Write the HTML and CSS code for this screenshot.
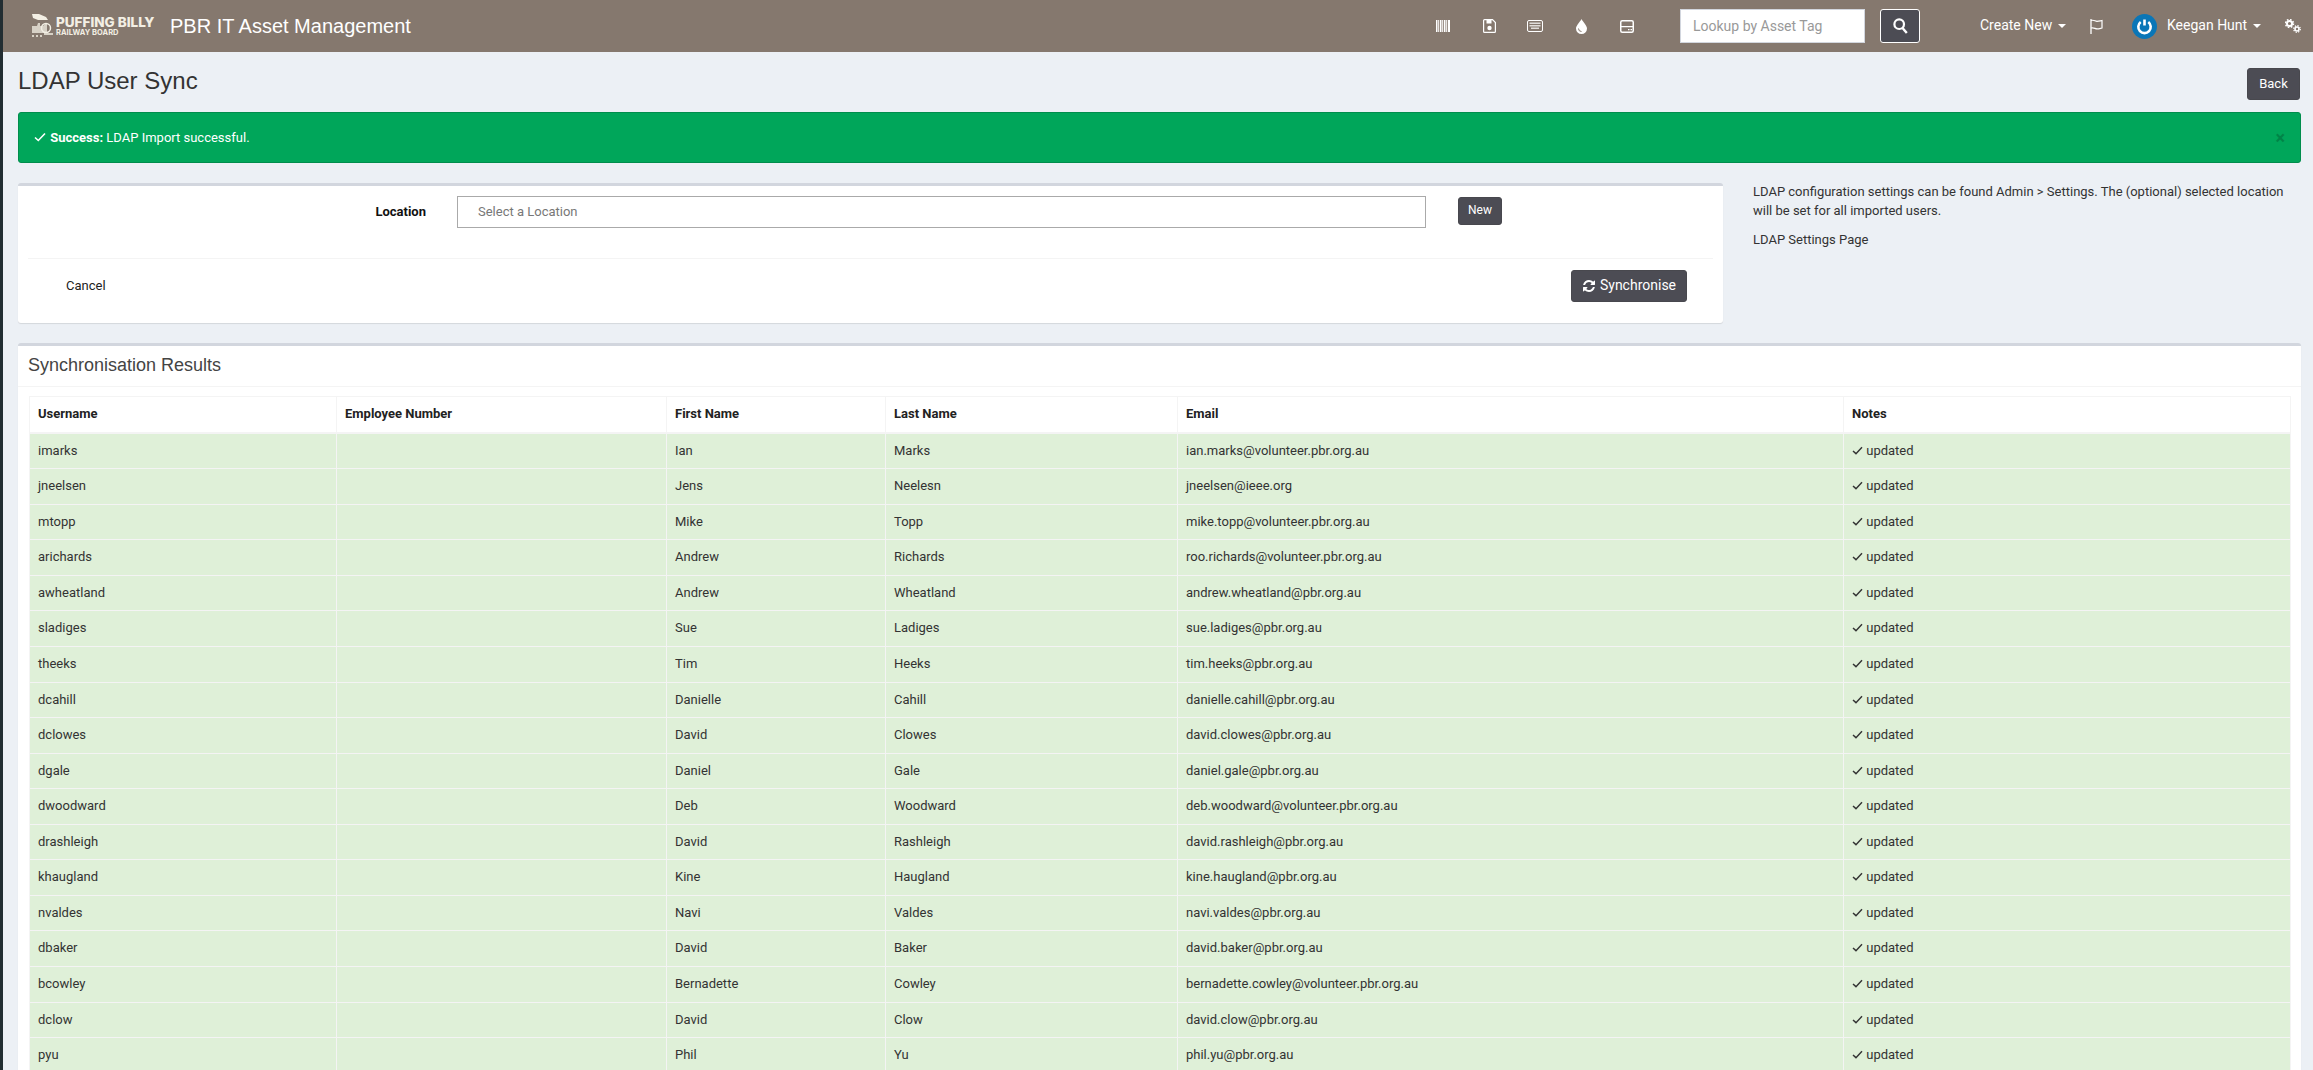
FILE: index.html
```html
<!DOCTYPE html>
<html lang="en">
<head>
    <meta charset="UTF-8">
    <title>LDAP User Sync</title>
    <link rel="stylesheet" href="styles.css">
</head>
<body>
    <div class="strip"></div>
    <div class="app">
        <!-- top bar -->
        <header class="topbar">
            <a class="logo">
                <svg class="logo-loco" width="21" height="26" viewBox="0 0 21 26">
                    <path d="M0 1h7l7 3 2 3H6L1 5z" fill="#f3efe4"/>
                    <path d="M0 13h5l1-3h2v3h3l2-2h2v9H0z" fill="#f3efe4" opacity=".75"/>
                    <circle cx="14" cy="15" r="4.500" fill="none" stroke="#f3efe4" stroke-width="1.500"/>
                    <path d="M0 23h2M4 23h2M8 23h2M12 21h9" stroke="#f3efe4" stroke-width="1.500"/>
                </svg>
                <span class="logo-words">
                    <span class="logo-main">PUFFING BILLY</span>
                    <span class="logo-sub">RAILWAY BOARD</span>
                </span>
            </a>
            <a class="app-name">PBR IT Asset Management</a>

            <nav class="nav-icons">
                <a><svg width="14" height="12" viewBox="0 0 14 12"><path d="M0 0h1.500v12H0zM2.200 0h1v12h-1zM4 0h1.500v12H4zM6.200 0h1v12h-1zM8 0h1.500v12H8zM10.200 0h1v12h-1zM12 0h2v12h-2z" fill="#fff"/></svg></a>
                <a><svg width="13" height="14" viewBox="0 0 13 14"><path d="M1.500.6h8l2.900 2.900v9a.9.900 0 0 1-.9.900h-10a.9.900 0 0 1-.9-.900v-11a.9.900 0 0 1 .9-.900z" fill="none" stroke="#fff" stroke-width="1.200"/><path d="M3.500 1h5v3.500h-5z" fill="#fff"/><circle cx="6.500" cy="9" r="2.200" fill="#fff"/></svg></a>
                <a><svg width="16" height="12" viewBox="0 0 16 12"><rect x=".5" y=".5" width="15" height="11" rx="1.500" fill="none" stroke="#fff"/><path d="M2.500 2.500h11V4h-11zM2.500 5h11v1.500h-11zM4 7.500h8V9H4z" fill="#fff" opacity=".75"/></svg></a>
                <a><svg width="11" height="15" viewBox="0 0 11 15"><path d="M5.500 0C7 3 11 6.500 11 9.500a5.500 5.500 0 0 1-11 0C0 6.500 4 3 5.500 0z" fill="#fff"/><path d="M2.500 9.500a3 3 0 0 0 3 3" fill="none" stroke="#85786e"/></svg></a>
                <a><svg width="14" height="13" viewBox="0 0 14 13"><rect x=".75" y=".75" width="12.500" height="11.500" rx="1.500" fill="none" stroke="#fff" stroke-width="1.500"/><path d="M1 6h12v1.200H1zM8 9h1.500v1.200H8zM10.500 9H12v1.200h-1.500z" fill="#fff"/></svg></a>
            </nav>

            <input class="tag-lookup" type="text" placeholder="Lookup by Asset Tag">
            <button class="tag-search">
                <svg width="15" height="16" viewBox="0 0 15 16"><circle cx="6.200" cy="6.200" r="4.800" fill="none" stroke="#fff" stroke-width="2.200"/><path d="M9.500 10l4.300 5" stroke="#fff" stroke-width="2.400"/></svg>
            </button>

            <a class="nav-text create-new">Create New <i class="caret"></i></a>
            <a class="nav-flag"><svg width="13" height="15" viewBox="0 0 13 15"><path d="M1 0v15" stroke="#fff" stroke-width="1.300"/><path d="M1 1.500c3-1 4 .8 6 .8 2 0 3.500-.6 5-.8v7.500c-1.500.3-3 .9-5 .9-2 0-3-1.800-6-.9" fill="none" stroke="#fff" stroke-width="1.200"/></svg></a>
            <svg class="avatar" width="25" height="25" viewBox="0 0 25 25">
                <circle cx="12.500" cy="12.500" r="12.500" fill="#0a76b7"/>
                <path d="M8.700 8a6.200 6.200 0 1 0 7.600 0" fill="none" stroke="#fff" stroke-width="2.600"/>
                <path d="M12.500 5.500v6" stroke="#fff" stroke-width="2.600"/>
            </svg>
            <a class="nav-text user-name">Keegan Hunt <i class="caret"></i></a>
            <a class="nav-gears">
                <svg width="16" height="14" viewBox="0 0 16 14">
                    <circle cx="4.500" cy="4.500" r="2.600" fill="none" stroke="#fff" stroke-width="2"/>
                    <circle cx="4.500" cy="4.500" r="4" fill="none" stroke="#fff" stroke-width="1.500" stroke-dasharray="1.600 1.540"/>
                    <circle cx="12" cy="10" r="2" fill="none" stroke="#fff" stroke-width="1.600"/>
                    <circle cx="12" cy="10" r="3.300" fill="none" stroke="#fff" stroke-width="1.300" stroke-dasharray="1.300 1.290"/>
                </svg>
            </a>
        </header>

        <main class="content">
            <div class="page-head">
                <h1>LDAP User Sync</h1>
                <a class="btn back-btn">Back</a>
            </div>

            <div class="alert">
                <svg class="check" width="12" height="10" viewBox="0 0 12 10"><path d="M1 5.500l3.300 3L11 1.500" fill="none" stroke="#fff" stroke-width="1.600"/></svg>
                <strong>Success:</strong> LDAP Import successful.
                <span class="alert-close">×</span>
            </div>

            <div class="sync-row">
                <section class="box sync-form">
                    <div class="form-row">
                        <label class="form-label">Location</label>
                        <div class="fake-select">Select a Location</div>
                        <a class="btn new-btn">New</a>
                    </div>
                    <div class="form-foot">
                        <a class="cancel">Cancel</a>
                        <a class="btn sync-btn">
                            <svg width="14" height="14" viewBox="0 0 1792 1792"><path fill="#fff" d="M1639 1056q0 5-1 7-64 268-268 434.500t-478 166.500q-146 0-282.500-55t-243.500-157l-129 129q-19 19-45 19t-45-19-19-45v-448q0-26 19-45t45-19h448q26 0 45 19t19 45-19 45l-137 137q71 66 161 102t187 36q134 0 250-65t186-179q11-17 53-117 8-23 30-23h192q13 0 22.500 9.500t9.500 22.500zm25-800v448q0 26-19 45t-45 19h-448q-26 0-45-19t-19-45 19-45l138-138q-148-137-349-137-134 0-250 65t-186 179q-11 17-53 117-8 23-30 23h-199q-13 0-22.500-9.500t-9.500-22.500v-7q65-268 270-434.500t480-166.500q146 0 284 55.500t245 156.500l130-129q19-19 45-19t45 19 19 45z"/></svg>
                            Synchronise
                        </a>
                    </div>
                </section>
                <aside class="sync-help">
                    <p>LDAP configuration settings can be found Admin &gt; Settings. The (optional) selected location will be set for all imported users.</p>
                    <p><a>LDAP Settings Page</a></p>
                </aside>
            </div>

            <section class="box results">
                <h2 class="box-title">Synchronisation Results</h2>
                <div class="box-body">
                    <table class="results-table">
                        <colgroup>
                            <col class="col-user"><col class="col-emp"><col class="col-first"><col class="col-last"><col class="col-email"><col class="col-notes">
                        </colgroup>
                        <thead>
                            <tr><th>Username</th><th>Employee Number</th><th>First Name</th><th>Last Name</th><th>Email</th><th>Notes</th></tr>
                        </thead>
                        <tbody>
                            <tr><td>imarks</td><td></td><td>Ian</td><td>Marks</td><td>ian.marks@volunteer.pbr.org.au</td><td><svg class="tick" width="11" height="9" viewBox="0 0 12 10"><path d="M1 5.500l3.300 3L11 1.500" fill="none" stroke="#333" stroke-width="1.600"/></svg> updated</td></tr>
                            <tr><td>jneelsen</td><td></td><td>Jens</td><td>Neelesn</td><td>jneelsen@ieee.org</td><td><svg class="tick" width="11" height="9" viewBox="0 0 12 10"><path d="M1 5.500l3.300 3L11 1.500" fill="none" stroke="#333" stroke-width="1.600"/></svg> updated</td></tr>
                            <tr><td>mtopp</td><td></td><td>Mike</td><td>Topp</td><td>mike.topp@volunteer.pbr.org.au</td><td><svg class="tick" width="11" height="9" viewBox="0 0 12 10"><path d="M1 5.500l3.300 3L11 1.500" fill="none" stroke="#333" stroke-width="1.600"/></svg> updated</td></tr>
                            <tr><td>arichards</td><td></td><td>Andrew</td><td>Richards</td><td>roo.richards@volunteer.pbr.org.au</td><td><svg class="tick" width="11" height="9" viewBox="0 0 12 10"><path d="M1 5.500l3.300 3L11 1.500" fill="none" stroke="#333" stroke-width="1.600"/></svg> updated</td></tr>
                            <tr><td>awheatland</td><td></td><td>Andrew</td><td>Wheatland</td><td>andrew.wheatland@pbr.org.au</td><td><svg class="tick" width="11" height="9" viewBox="0 0 12 10"><path d="M1 5.500l3.300 3L11 1.500" fill="none" stroke="#333" stroke-width="1.600"/></svg> updated</td></tr>
                            <tr><td>sladiges</td><td></td><td>Sue</td><td>Ladiges</td><td>sue.ladiges@pbr.org.au</td><td><svg class="tick" width="11" height="9" viewBox="0 0 12 10"><path d="M1 5.500l3.300 3L11 1.500" fill="none" stroke="#333" stroke-width="1.600"/></svg> updated</td></tr>
                            <tr><td>theeks</td><td></td><td>Tim</td><td>Heeks</td><td>tim.heeks@pbr.org.au</td><td><svg class="tick" width="11" height="9" viewBox="0 0 12 10"><path d="M1 5.500l3.300 3L11 1.500" fill="none" stroke="#333" stroke-width="1.600"/></svg> updated</td></tr>
                            <tr><td>dcahill</td><td></td><td>Danielle</td><td>Cahill</td><td>danielle.cahill@pbr.org.au</td><td><svg class="tick" width="11" height="9" viewBox="0 0 12 10"><path d="M1 5.500l3.300 3L11 1.500" fill="none" stroke="#333" stroke-width="1.600"/></svg> updated</td></tr>
                            <tr><td>dclowes</td><td></td><td>David</td><td>Clowes</td><td>david.clowes@pbr.org.au</td><td><svg class="tick" width="11" height="9" viewBox="0 0 12 10"><path d="M1 5.500l3.300 3L11 1.500" fill="none" stroke="#333" stroke-width="1.600"/></svg> updated</td></tr>
                            <tr><td>dgale</td><td></td><td>Daniel</td><td>Gale</td><td>daniel.gale@pbr.org.au</td><td><svg class="tick" width="11" height="9" viewBox="0 0 12 10"><path d="M1 5.500l3.300 3L11 1.500" fill="none" stroke="#333" stroke-width="1.600"/></svg> updated</td></tr>
                            <tr><td>dwoodward</td><td></td><td>Deb</td><td>Woodward</td><td>deb.woodward@volunteer.pbr.org.au</td><td><svg class="tick" width="11" height="9" viewBox="0 0 12 10"><path d="M1 5.500l3.300 3L11 1.500" fill="none" stroke="#333" stroke-width="1.600"/></svg> updated</td></tr>
                            <tr><td>drashleigh</td><td></td><td>David</td><td>Rashleigh</td><td>david.rashleigh@pbr.org.au</td><td><svg class="tick" width="11" height="9" viewBox="0 0 12 10"><path d="M1 5.500l3.300 3L11 1.500" fill="none" stroke="#333" stroke-width="1.600"/></svg> updated</td></tr>
                            <tr><td>khaugland</td><td></td><td>Kine</td><td>Haugland</td><td>kine.haugland@pbr.org.au</td><td><svg class="tick" width="11" height="9" viewBox="0 0 12 10"><path d="M1 5.500l3.300 3L11 1.500" fill="none" stroke="#333" stroke-width="1.600"/></svg> updated</td></tr>
                            <tr><td>nvaldes</td><td></td><td>Navi</td><td>Valdes</td><td>navi.valdes@pbr.org.au</td><td><svg class="tick" width="11" height="9" viewBox="0 0 12 10"><path d="M1 5.500l3.300 3L11 1.500" fill="none" stroke="#333" stroke-width="1.600"/></svg> updated</td></tr>
                            <tr><td>dbaker</td><td></td><td>David</td><td>Baker</td><td>david.baker@pbr.org.au</td><td><svg class="tick" width="11" height="9" viewBox="0 0 12 10"><path d="M1 5.500l3.300 3L11 1.500" fill="none" stroke="#333" stroke-width="1.600"/></svg> updated</td></tr>
                            <tr><td>bcowley</td><td></td><td>Bernadette</td><td>Cowley</td><td>bernadette.cowley@volunteer.pbr.org.au</td><td><svg class="tick" width="11" height="9" viewBox="0 0 12 10"><path d="M1 5.500l3.300 3L11 1.500" fill="none" stroke="#333" stroke-width="1.600"/></svg> updated</td></tr>
                            <tr><td>dclow</td><td></td><td>David</td><td>Clow</td><td>david.clow@pbr.org.au</td><td><svg class="tick" width="11" height="9" viewBox="0 0 12 10"><path d="M1 5.500l3.300 3L11 1.500" fill="none" stroke="#333" stroke-width="1.600"/></svg> updated</td></tr>
                            <tr><td>pyu</td><td></td><td>Phil</td><td>Yu</td><td>phil.yu@pbr.org.au</td><td><svg class="tick" width="11" height="9" viewBox="0 0 12 10"><path d="M1 5.500l3.300 3L11 1.500" fill="none" stroke="#333" stroke-width="1.600"/></svg> updated</td></tr>
                        </tbody>
                    </table>
                </div>
            </section>
        </main>
    </div>
</body>
</html>
```

FILE: styles.css
```css
* {
    box-sizing: border-box;
    margin: 0;
    padding: 0;
}

html, body {
    height: 100%;
    overflow: hidden;
}

body {
    display: flex;
    background: #ecf0f5;
    color: #333;
    font-family: Roboto, "Open Sans", sans-serif;
    font-size: 13px;
    line-height: 1.42857;
}

.strip {
    flex: 0 0 3px;
    background: #222d32;
}

.app {
    flex: 1;
    min-width: 0;
}

/* top bar */
.topbar {
    display: flex;
    align-items: center;
    height: 52px;
    padding: 0 12px 0 29px;
    background: #85786e;
    color: #fff;
}

.logo {
    display: flex;
    align-items: center;
    width: 123px;
    color: #f3efe4;
}

.logo-loco {
    flex: none;
    margin-right: 3px;
}

.logo-words {
    display: flex;
    flex-direction: column;
    font-family: Inter, "Liberation Sans", sans-serif;
    font-weight: 800;
    line-height: 1;
}

.logo-main {
    font-size: 13.5px;
    white-space: nowrap;
}

.logo-sub {
    font-size: 7.5px;
    font-weight: 700;
    white-space: nowrap;
}

.app-name {
    margin-left: 15px;
    font-family: "Liberation Sans", Arial, sans-serif;
    font-size: 20px;
    white-space: nowrap;
}

.nav-icons {
    display: flex;
    margin-left: auto;
}

.nav-icons a {
    display: flex;
    align-items: center;
    justify-content: center;
    width: 46px;
    height: 34px;
}

.tag-lookup {
    width: 185px;
    height: 34px;
    margin-left: 30px;
    padding: 6px 12px;
    border: 1px solid #d2d6de;
    background: #fff;
    font-family: inherit;
    font-size: 14px;
}

.tag-lookup::placeholder {
    color: #999;
}

.tag-search {
    display: flex;
    align-items: center;
    justify-content: center;
    width: 40px;
    height: 34px;
    margin-left: 15px;
    border: 1px solid #fff;
    border-radius: 3px;
    background: #4c4c54;
}

.nav-text {
    font-size: 14px;
    white-space: nowrap;
}

.create-new {
    width: 80px;
    margin-left: 60px;
}

.user-name {
    width: 87px;
    margin-left: 10px;
}

.caret {
    display: inline-block;
    width: 0;
    height: 0;
    margin-left: 2px;
    vertical-align: middle;
    border-top: 4px solid #fff;
    border-right: 4px solid transparent;
    border-left: 4px solid transparent;
}

.nav-flag {
    display: flex;
    margin-left: 30px;
}

.avatar {
    flex: none;
    margin-left: 29px;
}

.nav-gears {
    display: flex;
    margin-left: 31px;
}

/* content */
.content {
    padding: 16px 12px 0 15px;
}

.page-head {
    display: flex;
    align-items: flex-start;
    justify-content: space-between;
    height: 32px;
}

h1 {
    font-family: "Liberation Sans", Arial, sans-serif;
    font-size: 24px;
    font-weight: normal;
    line-height: 1.1;
}

.btn {
    display: inline-flex;
    align-items: center;
    justify-content: center;
    border: 1px solid #48484e;
    border-radius: 3px;
    background: #4c4c54;
    color: #fff;
}

.back-btn {
    width: 53px;
    height: 32px;
    margin-right: 1px;
}

.alert {
    position: relative;
    height: 51px;
    margin-top: 12px;
    padding: 16px 15px 14px;
    border: 1px solid #008d4c;
    border-radius: 3px;
    background: #00a65a;
    color: #fff;
}

.check {
    margin-right: 1px;
}

.alert-close {
    position: absolute;
    top: 12px;
    right: 15px;
    color: #000;
    font-size: 18px;
    font-weight: bold;
    opacity: .2;
}

.sync-row {
    display: flex;
    align-items: flex-start;
    margin-top: 20px;
}

.box {
    border-top: 3px solid #d2d6de;
    border-radius: 3px;
    background: #fff;
    box-shadow: 0 1px 1px rgba(0,0,0,0.1);
}

.sync-form {
    flex: 0 0 1705px;
    height: 140px;
    padding: 10px 10px 0;
}

.form-row {
    display: flex;
    align-items: flex-start;
    height: 63px;
    border-bottom: 1px solid #f4f4f4;
}

.form-label {
    width: 398px;
    padding-top: 7px;
    text-align: right;
    color: #111;
    font-weight: bold;
}

.fake-select {
    width: 969px;
    height: 32px;
    margin-left: 31px;
    padding: 6px 20px;
    border: 1px solid #aaa;
    color: #777;
}

.new-btn {
    width: 44px;
    height: 28px;
    margin-top: 1px;
    margin-left: 32px;
    font-size: 12px;
}

.form-foot {
    display: flex;
    align-items: center;
    justify-content: space-between;
    padding: 11px 26px 0 38px;
}

.cancel {
    color: #222;
}

.sync-btn {
    gap: 4px;
    width: 116px;
    height: 32px;
    font-size: 14px;
}

.sync-help {
    flex: 1;
    margin-left: 30px;
}

.sync-help p {
    margin-bottom: 10.500px;
}

.results {
    margin-top: 20px;
}

.box-title {
    height: 41px;
    padding: 0 10px;
    border-bottom: 1px solid #f4f4f4;
    color: #444;
    font-family: "Liberation Sans", Arial, sans-serif;
    font-size: 18px;
    font-weight: normal;
    line-height: 38px;
}

.box-body {
    padding: 9px 11px 0;
}

.results-table {
    width: 2261px;
    table-layout: fixed;
    border-collapse: collapse;
}

.col-user { width: 307px; }
.col-emp { width: 330px; }
.col-first { width: 219px; }
.col-last { width: 292px; }
.col-email { width: 666px; }
.col-notes { width: 447px; }

.results-table th,
.results-table td {
    padding: 8px;
    border: 1px solid #f4f4f4;
    text-align: left;
}

.results-table th {
    border-bottom-width: 2px;
    color: #222;
}

.results-table td {
    background: #dff0d8;
}
```
